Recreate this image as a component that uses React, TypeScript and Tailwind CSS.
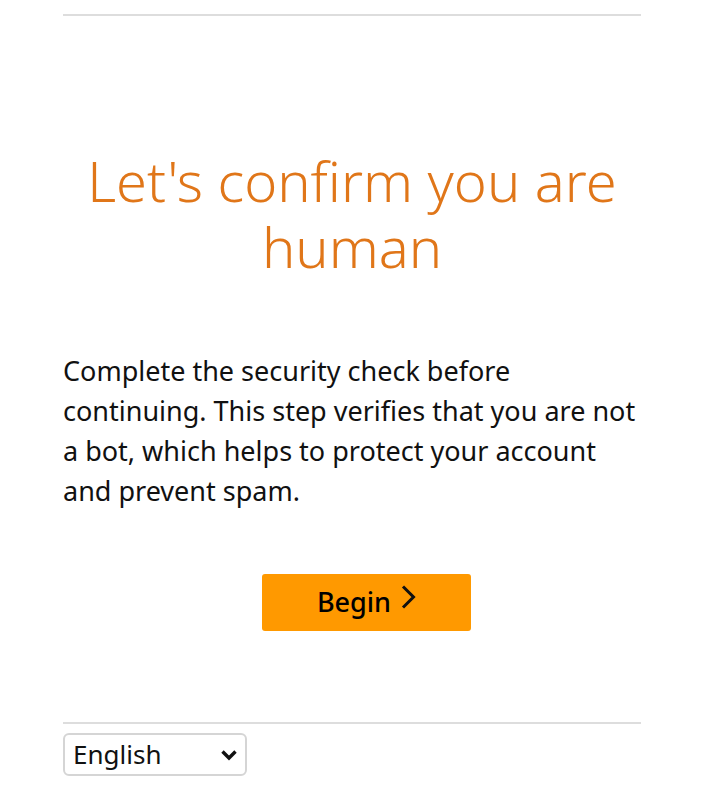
import React from 'react';

export default function App() {
  return (
    <div className="min-h-[800px] bg-white px-[63px] font-['Noto_Sans',sans-serif] text-[#111]">
      <div className="pt-[14px]">
        <div className="h-[2px] bg-[#dddddd]" />
      </div>

      {/* Heading */}
      <h1 className="mt-[131px] text-center text-[56px] font-light leading-[66px] text-[#e07619]">
        Let's confirm you are human
      </h1>

      {/* Description */}
      <p className="mt-[72px] text-[27px] leading-[40px]">
        Complete the security check before continuing. This step verifies that you are not a bot, which helps to protect your account and prevent spam.
      </p>

      <div className="mt-[63px] flex justify-center pl-[29px]">
        <button className="flex h-[57px] w-[209px] items-center justify-center gap-[10px] rounded-[3px] bg-[#ff9900] text-[27px] font-medium text-black">
          <span>Begin</span>
          <svg className="-mt-[12px] shrink-0" width="15" height="24" viewBox="0 0 15 24" fill="none">
            <path d="M2 1.5l10.5 10.5L2 22.5" stroke="#111" strokeWidth="3" />
          </svg>
        </button>
      </div>

      <div className="mt-[91px] h-[2px] bg-[#dddddd]" />

      <div className="mt-[9px] flex h-[43px] w-[184px] items-center justify-between rounded-[6px] border-2 border-[#d5d5d5] pl-[8px] pr-[7px]">
        <span className="text-[26px]">English</span>
        <svg width="18" height="12" viewBox="0 0 18 12" fill="none">
          <path d="M2.5 2.5l6.5 6.5 6.5-6.5" stroke="#111" strokeWidth="3.4" />
        </svg>
      </div>
    </div>
  );
}
